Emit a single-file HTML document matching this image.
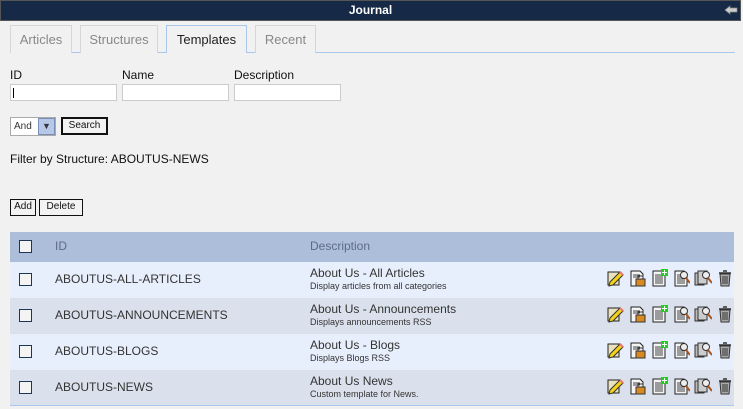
<!DOCTYPE html>
<html><head><style>
*{margin:0;padding:0;box-sizing:border-box}
body{width:743px;height:409px;background:#f1f1f1;font-family:"Liberation Sans",Arial,sans-serif;position:relative;overflow:hidden;color:#333}
.a{position:absolute}
.hdr{left:0;top:0;width:741px;height:21px;background:#162a47;border:1px solid #555;color:#fff;font-weight:bold;font-size:12px;text-align:center;line-height:19px}
.tab{top:25px;height:28px;border:1px solid #d6d6d6;border-bottom:none;color:#888;font-size:13px;text-align:center;line-height:27px;background:#f1f1f1}
.tab.on{border-color:#a9c7ec;color:#222;height:28px;z-index:2}
.lbl{font-size:12px;color:#111;top:68px}
.inp{top:84px;height:17px;width:107px;background:#fff;border:1px solid #ccc}
.btn{background:#f3f3f3;border:1px solid #111;font-size:10px;color:#111;text-align:center;line-height:14px}
.row{left:10px;width:724px;height:36px}
.cb{left:9px;width:13px;height:13px;border:1px solid #1d3557;background:#f4f4f4}
.id{left:45px;font-size:12px;color:#333}
.d1{left:300px;font-size:12px;color:#333}
.d2{left:300px;font-size:9px;color:#333}
.ic{top:7px}
</style></head><body>
<div class="a hdr">Journal</div>
<svg class="a" style="left:724px;top:5px" width="14" height="10"><path d="M1 5 L6 1 L6 3 L13 3 L13 7 L6 7 L6 9 Z" fill="#ccc" stroke="#888" stroke-width=".7"/></svg>
<div class="a" style="left:10px;top:52px;width:725px;height:1px;background:#a9c7ec"></div>
<div class="a tab" style="left:10px;width:62px">Articles</div>
<div class="a tab" style="left:80px;width:78px">Structures</div>
<div class="a tab on" style="left:166px;width:81px;height:28px">Templates</div>
<div class="a tab" style="left:255px;width:61px">Recent</div>
<div class="a lbl" style="left:10px">ID</div>
<div class="a lbl" style="left:122px">Name</div>
<div class="a lbl" style="left:234px">Description</div>
<div class="a inp" style="left:10px"><div style="position:absolute;left:2px;top:3px;width:1px;height:10px;background:#000"></div></div>
<div class="a inp" style="left:122px"></div>
<div class="a inp" style="left:234px"></div>
<div class="a" style="left:10px;top:117px;width:46px;height:19px;background:#fff;border:1px solid #aaa;font-size:10px;line-height:17px;padding-left:3px">And</div>
<div class="a" style="left:38px;top:118px;width:17px;height:17px;background:#b7c8e6;border:1px solid #7a8fb8;text-align:center;font-size:9px;line-height:15px;color:#334">&#9660;</div>
<div class="a btn" style="left:61px;top:117px;width:47px;height:18px;border-width:2px;line-height:14px">Search</div>
<div class="a" style="left:10px;top:152px;font-size:12px;color:#111">Filter by Structure: ABOUTUS-NEWS</div>
<div class="a btn" style="left:10px;top:199px;width:26px;height:17px">Add</div>
<div class="a btn" style="left:39px;top:199px;width:44px;height:17px">Delete</div>
<div class="a row" style="top:232px;height:30px;background:#adbedb">
<div class="a cb" style="top:8px"></div>
<div class="a" style="left:45px;top:7px;font-size:12px;color:#5b6c86">ID</div>
<div class="a" style="left:300px;top:7px;font-size:12px;color:#5b6c86">Description</div>
</div>
<div id="rows"></div>
<div class="a" style="left:10px;top:405px;width:724px;height:1px;background:#a9c7ec"></div>
<script>
var d=[["ABOUTUS-ALL-ARTICLES","About Us - All Articles","Display articles from all categories"],["ABOUTUS-ANNOUNCEMENTS","About Us - Announcements","Displays announcements RSS"],["ABOUTUS-BLOGS","About Us - Blogs","Displays Blogs RSS"],["ABOUTUS-NEWS","About Us News","Custom template for News."]];
var doc='<svg width="18" height="18"><path d="M3 2h9l3 3v12H3z" fill="#f4f4f4" stroke="#222"/><path d="M5 6h7M5 8h8M5 10h8M5 12h8M5 14h8" stroke="#444"/>';
var ic=[
'<svg width="18" height="18"><path d="M2 3h11v13H2z" fill="#e8e2c0" stroke="#222"/><path d="M4 13l10-10 3 3-10 10-4 1z" fill="#f2d21a" stroke="#333"/><path d="M14 3l3 3" stroke="#e77" stroke-width="2"/></svg>',
'<svg width="18" height="18"><path d="M3 2h9l3 3v12H3z" fill="#f4f4f4" stroke="#222"/><path d="M5 6h7M5 8h7" stroke="#444"/><rect x="8" y="10" width="9" height="7" fill="#d88a22" stroke="#333"/><path d="M10 10V7h5v3" fill="none" stroke="#333"/></svg>',
doc+'<rect x="11" y="0" width="7" height="7" fill="#2c2"/><path d="M14.5 1v5M12 3.5h5" stroke="#fff"/></svg>',
doc+'<circle cx="12" cy="6" r="3.5" fill="#eee" stroke="#333"/><path d="M14 9l4 5" stroke="#a52" stroke-width="2"/></svg>',
'<svg width="18" height="18"><path d="M1 4h9v12H1z" fill="#bbb" stroke="#333"/><path d="M4 2h9v13H4z" fill="#ccc" stroke="#333"/><circle cx="12" cy="6" r="3.5" fill="#eee" stroke="#333"/><path d="M14 9l4 5" stroke="#a52" stroke-width="2"/></svg>',
'<svg width="18" height="18"><path d="M4 5h10l-1 12H5z" fill="#aaa" stroke="#333"/><path d="M3 4h12M7 2h4" stroke="#333" stroke-width="1.5"/><path d="M7 7v8M9 7v8M11 7v8" stroke="#333"/></svg>'];
var h='';
for(var i=0;i<4;i++){var t=262+i*36;h+='<div class="a row" style="top:'+t+'px;background:'+(i%2?'#dbe1ec':'#e8effc')+'"><div class="a cb" style="top:11px"></div><div class="a id" style="top:10px">'+d[i][0]+'</div><div class="a d1" style="top:4px">'+d[i][1]+'</div><div class="a d2" style="top:19px">'+d[i][2]+'</div>';
for(var j=0;j<6;j++)h+='<div class="a ic" style="left:'+(596+j*22)+'px">'+ic[j]+'</div>';h+='</div>';}
document.getElementById('rows').innerHTML=h;
</script>
</body></html>
